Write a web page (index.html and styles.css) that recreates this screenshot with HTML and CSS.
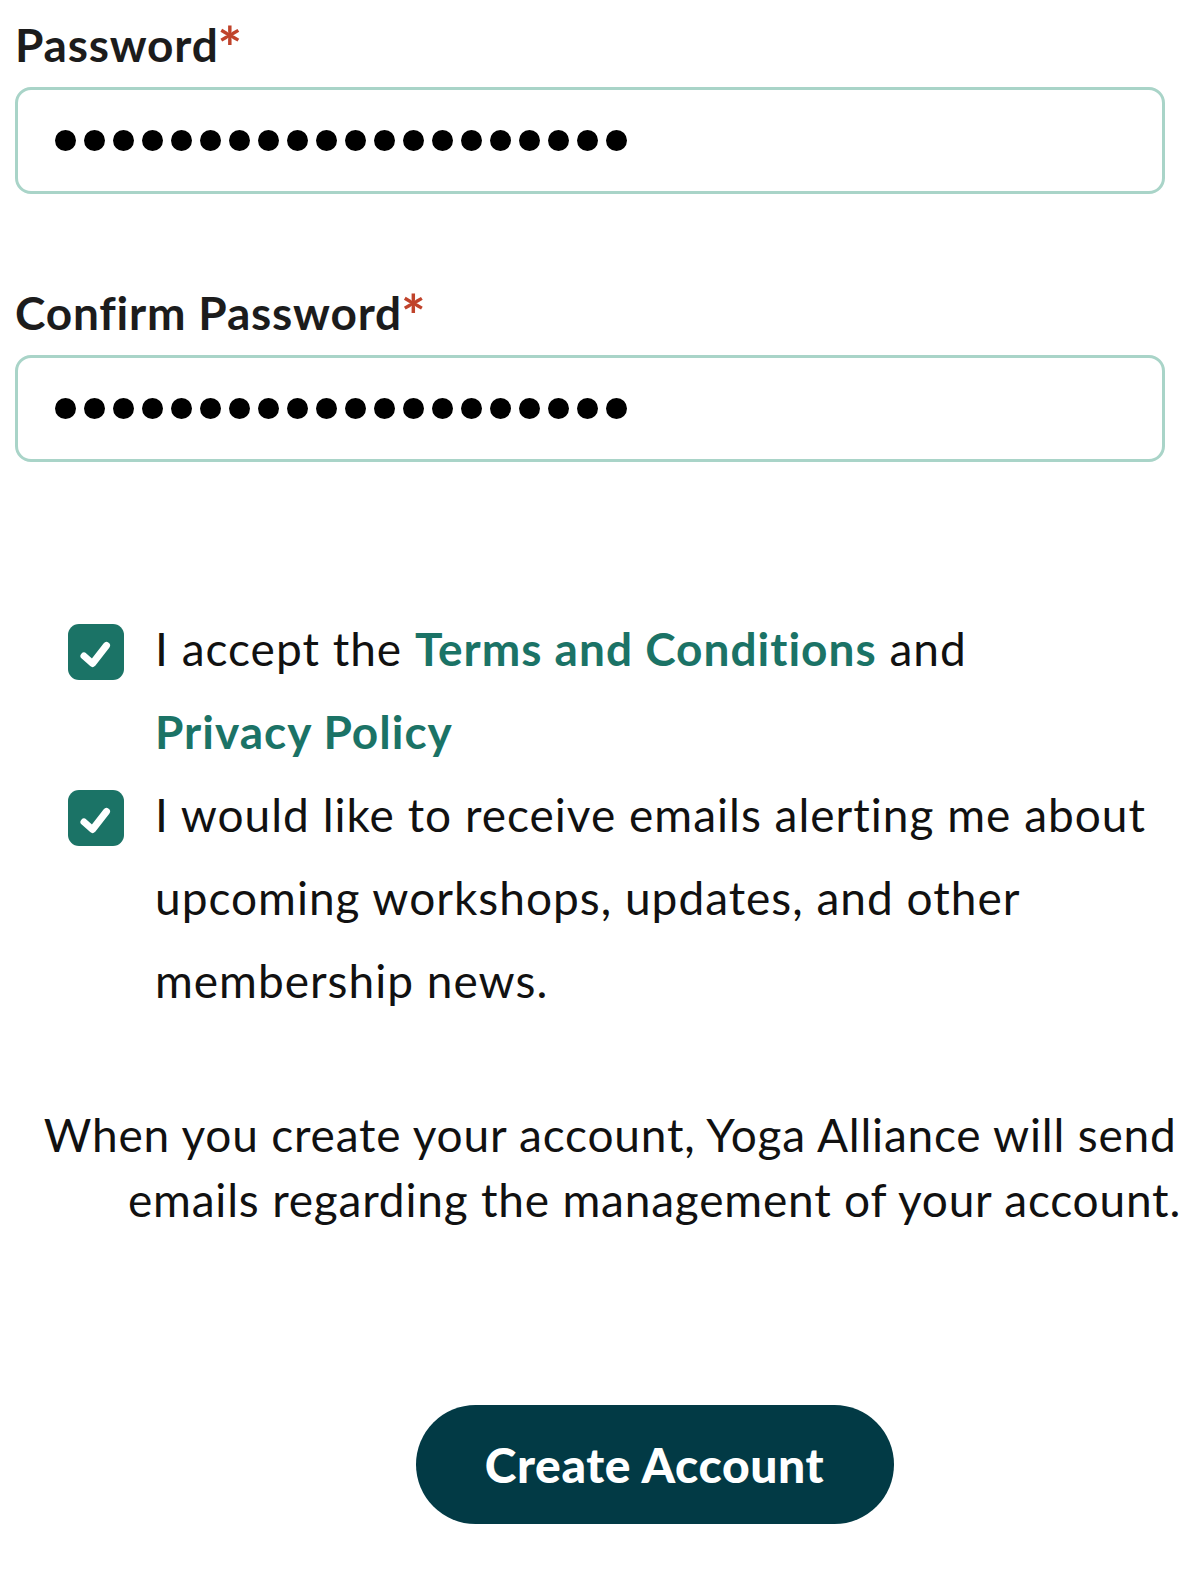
FILE: index.html
```html
<!DOCTYPE html>
<html lang="en">
<head>
<meta charset="utf-8">
<title>Create Account</title>
<link rel="stylesheet" href="styles.css">
</head>
<body>
<main class="page">
  <div class="form">
    <div class="field">
      <label class="label">Password<span class="req">*</span></label>
      <div class="input" role="textbox" aria-label="Password">
        <span class="dot"></span><span class="dot"></span><span class="dot"></span><span class="dot"></span><span class="dot"></span>
        <span class="dot"></span><span class="dot"></span><span class="dot"></span><span class="dot"></span><span class="dot"></span>
        <span class="dot"></span><span class="dot"></span><span class="dot"></span><span class="dot"></span><span class="dot"></span>
        <span class="dot"></span><span class="dot"></span><span class="dot"></span><span class="dot"></span><span class="dot"></span>
      </div>
    </div>
    <div class="field field-second">
      <label class="label">Confirm Password<span class="req">*</span></label>
      <div class="input" role="textbox" aria-label="Confirm Password">
        <span class="dot"></span><span class="dot"></span><span class="dot"></span><span class="dot"></span><span class="dot"></span>
        <span class="dot"></span><span class="dot"></span><span class="dot"></span><span class="dot"></span><span class="dot"></span>
        <span class="dot"></span><span class="dot"></span><span class="dot"></span><span class="dot"></span><span class="dot"></span>
        <span class="dot"></span><span class="dot"></span><span class="dot"></span><span class="dot"></span><span class="dot"></span>
      </div>
    </div>

    <div class="checks">
      <div class="check-row">
        <span class="box"><svg viewBox="0 0 56 56" width="56" height="56"><path d="M16 32 L24.5 39.5 L38.5 21.5" fill="none" stroke="#fff" stroke-width="7" stroke-linecap="round" stroke-linejoin="round"/></svg></span>
        <p class="check-text">I accept the <a class="link" href="#">Terms and Conditions</a> and<br><a class="link" href="#">Privacy Policy</a></p>
      </div>
      <div class="check-row">
        <span class="box"><svg viewBox="0 0 56 56" width="56" height="56"><path d="M16 32 L24.5 39.5 L38.5 21.5" fill="none" stroke="#fff" stroke-width="7" stroke-linecap="round" stroke-linejoin="round"/></svg></span>
        <p class="check-text">I would like to receive emails alerting me about upcoming workshops, updates, and other membership news.</p>
      </div>
    </div>
  </div>

  <section class="footer">
    <p class="notice">When you create your account, Yoga Alliance will send you<br>emails regarding the management of your account.</p>
    <button class="submit" type="button">Create Account</button>
  </section>
</main>
</body>
</html>
```

FILE: styles.css
```css
html, body {
  margin: 0;
  padding: 0;
  background: #ffffff;
}
body {
  width: 1179px;
  overflow: hidden;
  font-family: "Lato", "Noto Sans", sans-serif;
  color: #111111;
}
.page {
  display: flex;
  flex-direction: column;
}
.form {
  padding: 17px 14px 0 15px;
}
.field {
  display: flex;
  flex-direction: column;
}
.field-second {
  margin-top: 91px;
}
.label {
  font-size: 46px;
  line-height: 56px;
  font-weight: 700;
  color: #1c1c1c;
  letter-spacing: 0.8px;
}
.req {
  color: #c0432b;
  font-size: 58px;
  line-height: 0;
  font-weight: 700;
  letter-spacing: 0;
  vertical-align: -7px;
  margin-left: -1px;
}
.input {
  margin-top: 14px;
  height: 101px;
  border: 3px solid #a9d4c8;
  border-radius: 16px;
  display: flex;
  align-items: center;
  gap: 8px;
  padding-left: 37px;
}
.dot {
  width: 21px;
  height: 21px;
  border-radius: 50%;
  background: #000;
}
.checks {
  margin-top: 145px;
  padding-left: 53px;
  display: flex;
  flex-direction: column;
}
.check-row {
  display: flex;
  align-items: flex-start;
  gap: 31px;
}
.box {
  flex: none;
  width: 56px;
  height: 56px;
  margin-top: 17px;
  border-radius: 11px;
  background: #1b7366;
  display: flex;
}
.check-text {
  margin: 0;
  font-size: 46px;
  line-height: 83px;
  letter-spacing: 1px;
  color: #111;
  max-width: 995px;
}
.link {
  color: #1b7366;
  font-weight: 700;
  text-decoration: none;
  white-space: nowrap;
}
.footer {
  width: 1309px;
  margin-top: 80px;
  display: flex;
  flex-direction: column;
  align-items: center;
}
.notice {
  margin: 0;
  font-size: 46px;
  line-height: 65px;
  letter-spacing: 0.8px;
  text-align: center;
  white-space: nowrap;
  color: #111;
}
.submit {
  margin-top: 173px;
  width: 478px;
  height: 119px;
  border: none;
  border-radius: 60px;
  background: #023a45;
  color: #ffffff;
  font-family: "Lato", "Noto Sans", sans-serif;
  font-weight: 900;
  font-size: 48px;
  letter-spacing: 0.6px;
  cursor: pointer;
}
```
